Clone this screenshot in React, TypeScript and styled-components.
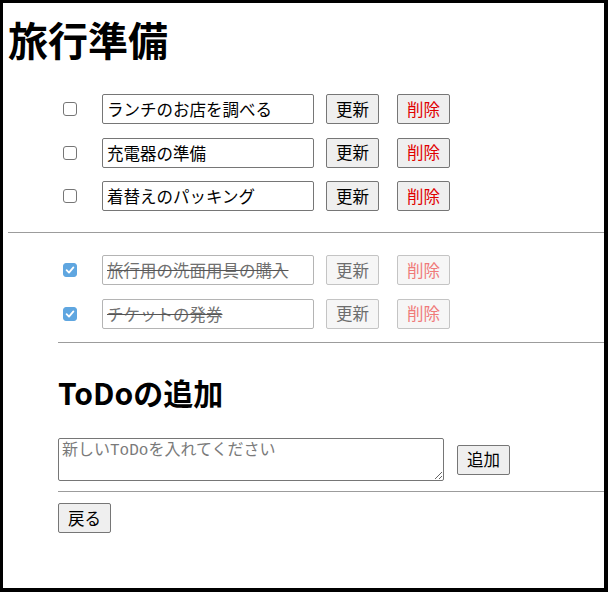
import { useState } from 'react';
import styled, { createGlobalStyle } from 'styled-components';

const GlobalStyle = createGlobalStyle`
  html, body {
    margin: 0;
    padding: 0;
    background: #000;
  }
  body {
    font-family: "Noto Sans CJK JP", "Noto Sans", sans-serif;
    color: #000;
  }
`;

const Frame = styled.div`
  box-sizing: border-box;
  width: 608px;
  height: 592px;
  border-style: solid;
  border-color: #000;
  border-width: 3px 4px 4px 3px;
  background: #fff;
  overflow: hidden;
`;

const Page = styled.div`
  display: flex;
  flex-direction: column;
  padding-left: 5px;
`;

const Title = styled.h1`
  margin: 12px 0 0;
  font-size: 40px;
  line-height: 48px;
  font-weight: 700;
`;

const List = styled.ul<{ $top: number }>`
  list-style: none;
  margin: ${({ $top }) => $top}px 0 0;
  padding: 0 0 0 55px;
  display: flex;
  flex-direction: column;
  gap: 13.5px;
`;

const Row = styled.li`
  display: flex;
  align-items: center;
  height: 30px;
`;

const CheckLabel = styled.label`
  display: flex;
  align-items: center;
  cursor: pointer;
`;

const HiddenInput = styled.input`
  position: absolute;
  opacity: 0;
  width: 0;
  height: 0;
  margin: 0;
`;

const Box = styled.span<{ $checked: boolean }>`
  box-sizing: border-box;
  width: 14px;
  height: 14px;
  border-radius: 3px;
  border: 1px solid ${({ $checked }) => ($checked ? '#5fa6e0' : '#767676')};
  background: ${({ $checked }) => ($checked ? '#5fa6e0' : '#fff')};
  display: flex;
  align-items: center;
  justify-content: center;
`;

const TextInput = styled.input`
  box-sizing: border-box;
  width: 212px;
  height: 30px;
  margin-left: 25px;
  padding: 0 4px;
  border: 1px solid #767676;
  border-radius: 2px;
  font-family: "Noto Sans CJK JP", sans-serif;
  font-size: 16.5px;
  color: #000;
  background: #fff;

  &:disabled {
    color: #707070;
    border-color: #b4b4b4;
    text-decoration: line-through;
    text-decoration-color: #555;
  }
`;

const Button = styled.button<{ $danger?: boolean; $gap?: number }>`
  box-sizing: border-box;
  height: 30px;
  margin-left: ${({ $gap }) => $gap ?? 0}px;
  padding: 0 9px;
  border: 1px solid #767676;
  border-radius: 2px;
  background: #efefef;
  font-family: "Noto Sans CJK JP", sans-serif;
  font-size: 16.5px;
  line-height: 1;
  color: ${({ $danger }) => ($danger ? '#e00000' : '#000')};
  cursor: pointer;

  &:disabled {
    background: #f6f6f6;
    border-color: #c4c4c4;
    color: ${({ $danger }) => ($danger ? '#f07a7a' : '#6d6d6d')};
    cursor: default;
  }
`;

const Divider = styled.hr<{ $top: number }>`
  align-self: stretch;
  margin: ${({ $top }) => $top}px 0 0;
  border: none;
  border-top: 1px solid #9c9c9c;
  height: 0;
`;

const AddSection = styled.section`
  display: flex;
  flex-direction: column;
  align-items: flex-start;
  margin-left: 50px;
`;

const SubTitle = styled.h2`
  margin: 31px 0 0;
  font-size: 30px;
  line-height: 36px;
  font-weight: 700;
`;

const AddForm = styled.div`
  display: flex;
  align-items: center;
  margin-top: 28px;
`;

const NewTodo = styled.textarea`
  box-sizing: border-box;
  width: 386px;
  height: 43px;
  margin: 0 13px 0 0;
  padding: 2px 3px;
  border: 1px solid #767676;
  border-radius: 2px;
  font-family: "Liberation Mono", "Noto Sans CJK JP", monospace;
  font-size: 16px;
  line-height: 20px;

  &::placeholder {
    color: #7a7a7a;
  }
`;

const BackButton = styled(Button)`
  margin-top: 11px;
`;

interface Todo {
  id: number;
  title: string;
  completed: boolean;
}

const initialTodos: Todo[] = [
  { id: 1, title: 'ランチのお店を調べる', completed: false },
  { id: 2, title: '充電器の準備', completed: false },
  { id: 3, title: '着替えのパッキング', completed: false },
  { id: 4, title: '旅行用の洗面用具の購入', completed: true },
  { id: 5, title: 'チケットの発券', completed: true },
];

const Check = () => (
  <svg width="10" height="10" viewBox="0 0 10 10">
    <path d="M1.6 5.2 L4 7.6 L8.4 2.4" fill="none" stroke="#fff" strokeWidth="1.8" strokeLinecap="round" strokeLinejoin="round" />
  </svg>
);

const TodoRow = ({ todo, onToggle }: { todo: Todo; onToggle: (id: number) => void }) => (
  <Row>
    <CheckLabel>
      <HiddenInput type="checkbox" checked={todo.completed} onChange={() => onToggle(todo.id)} />
      <Box $checked={todo.completed}>{todo.completed && <Check />}</Box>
    </CheckLabel>
    <TextInput defaultValue={todo.title} disabled={todo.completed} />
    <Button $gap={12} disabled={todo.completed}>
      更新
    </Button>
    <Button $gap={18} $danger disabled={todo.completed}>
      削除
    </Button>
  </Row>
);

export default function App() {
  const [todos, setTodos] = useState<Todo[]>(initialTodos);

  const toggle = (id: number) =>
    setTodos((prev) => prev.map((t) => (t.id === id ? { ...t, completed: !t.completed } : t)));

  const open = todos.filter((t) => !t.completed);
  const done = todos.filter((t) => t.completed);

  return (
    <>
      <GlobalStyle />
      <Frame>
        <Page>
          <Title>旅行準備</Title>
          <List $top={31}>
            {open.map((todo) => (
              <TodoRow key={todo.id} todo={todo} onToggle={toggle} />
            ))}
          </List>
          <Divider $top={21} />
          <List $top={22}>
            {done.map((todo) => (
              <TodoRow key={todo.id} todo={todo} onToggle={toggle} />
            ))}
          </List>
          <AddSection>
            <Divider $top={13.5} />
            <SubTitle>ToDoの追加</SubTitle>
            <AddForm>
              <NewTodo placeholder="新しいToDoを入れてください" />
              <Button>追加</Button>
            </AddForm>
            <Divider $top={10} />
            <BackButton>戻る</BackButton>
          </AddSection>
        </Page>
      </Frame>
    </>
  );
}
